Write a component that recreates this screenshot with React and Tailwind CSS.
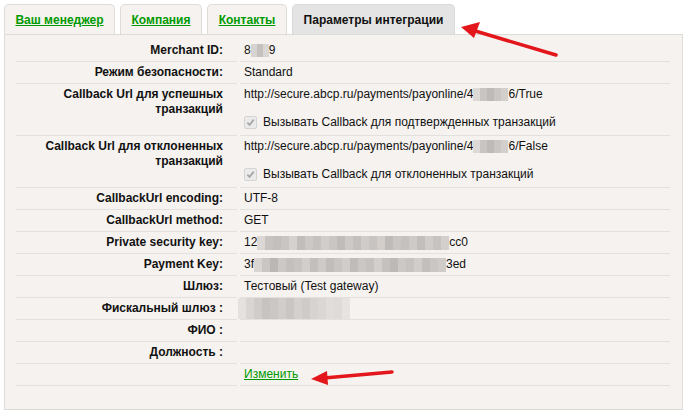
const tabs = [
  { label: 'Ваш менеджер', w: 'w-[111px]' },
  { label: 'Компания', w: 'w-[82px]' },
  { label: 'Контакты', w: 'w-[80px]' },
]

function Blur({ shades, h = 'h-[14px]', w = 'w-[8px]' }) {
  return (
    <span className={`inline-flex align-middle ${h}`}>
      {shades.map((c, i) => (
        <span key={i} className={`inline-block ${w} ${h}`} style={{ background: c }} />
      ))}
    </span>
  )
}

function Check({ children }) {
  return (
    <div className="mt-[13px] flex items-center gap-[6px] h-[15px]">
      <span className="flex items-center justify-center w-[13px] h-[13px] rounded-[2px] border border-[#d4d4d4] bg-[#ebebeb]">
        <svg width="9" height="9" viewBox="0 0 10 10">
          <path d="M1.5 5.2 L4 7.6 L8.6 1.8" fill="none" stroke="#a8a8a8" strokeWidth="2" />
        </svg>
      </span>
      <span>{children}</span>
    </div>
  )
}

function Row({ label, children, tall }) {
  return (
    <>
      <div className={`border-b border-[#e2e1df] pr-[14px] pt-[3px] text-right font-bold leading-[15px] ${tall ? 'pb-[6px]' : 'pb-[3px]'}`}>
        {label}
      </div>
      <div className={`border-b border-[#e2e1df] pl-[4px] pt-[3px] leading-[15px] ${tall ? 'pb-[5px]' : 'pb-[3px]'}`}>
        {children}
      </div>
    </>
  )
}

const g1 = ['#d6d3d0', '#c4c1be', '#d9d6d3']
const g2 = ['#dcd9d6', '#c8c5c2', '#bdbab7', '#c9c6c3', '#d2cfcc']
const g3 = ['#dad7d4', '#c6c3c0', '#c2bfbc', '#c8c5c2', '#d4d1ce', '#c0bdba', '#cbc8c5', '#c5c2bf', '#d0cdca', '#c9c6c3', '#bfbcb9', '#ccc9c6', '#c3c0bd', '#cfccc9', '#c7c4c1', '#d3cec9', '#bebbb8', '#c9c6c3', '#c4c1be', '#cdcac7', '#c1bebb', '#cfccc9', '#c6c3c0', '#d2cfcc']
const g4 = ['#d8d5d2', '#c9c6c3', '#bab7b4', '#cbc8c5', '#c3c0bd', '#c7c4c1', '#d1cecb', '#c2bfbc', '#cdcac7', '#c0bdba', '#c8c5c2', '#d0cdca', '#bfbcb9', '#cac7c4', '#c5c2bf', '#d2cfcc', '#c4c1be', '#bcb9b6', '#cbc8c5', '#c6c3c0', '#d0cdca', '#c2bfbc', '#c9c6c3', '#cecbc8']
const g5 = ['#e4e1de', '#d8d5d2', '#cfccc9', '#c6c3c0', '#cac7c4', '#d0cdca', '#c9c6c3', '#d3d0cd', '#cecbc8', '#d6d3d0', '#dad7d4', '#e0ddda', '#dedbd8', '#e6e3e0']

export default function App() {
  return (
    <div className="relative w-[689px] h-[412px] bg-white font-['Liberation_Sans',Arial,sans-serif] text-[12px] text-[#111] overflow-hidden">
      <div className="pl-[4px] pt-[4px]">
        <div className="flex gap-[5px] items-end">
          {tabs.map((t) => (
            <div key={t.label} className={`${t.w} h-[30px] flex items-center justify-center rounded-t-[5px] border border-b-0 border-[#dedcd9] bg-[#f5f2ef]`}>
              <a href="#" className="font-bold text-[#009a00] underline">{t.label}</a>
            </div>
          ))}
          <div className="w-[163px] h-[30px] flex items-center justify-center rounded-t-[5px] border border-b-0 border-[#d9d9d9] bg-[#e4e4e4] font-bold">
            Параметры интеграции
          </div>
        </div>
        <div className="w-[679px] h-[376px] border border-[#dedcd9] bg-[#f5f2ef] pl-[11px] pt-[5px]">
          <div className="grid grid-cols-[221px_430px] gap-x-[3px]">
            <Row label="Merchant ID:">
              8<Blur shades={g1} h="h-[13px]" w="w-[6px]" />9
            </Row>
            <Row label="Режим безопасности:">Standard</Row>
            <Row label={<>Callback Url для успешных<br />транзакций</>} tall>
              <div>http://secure.abcp.ru/payments/payonline/4<Blur shades={g2} h="h-[13px]" w="w-[7px]" />6/True</div>
              <Check>Вызывать Callback для подтвержденных транзакций</Check>
            </Row>
            <Row label={<>Callback Url для отклоненных<br />транзакций</>} tall>
              <div>http://secure.abcp.ru/payments/payonline/4<Blur shades={g2} h="h-[13px]" w="w-[7px]" />6/False</div>
              <Check>Вызывать Callback для отклоненных транзакций</Check>
            </Row>
            <Row label="CallbackUrl encoding:">UTF-8</Row>
            <Row label="CallbackUrl method:">GET</Row>
            <Row label="Private security key:">
              12<Blur shades={g3} />cc0
            </Row>
            <Row label="Payment Key:">
              3f<Blur shades={g4} />3ed
            </Row>
            <Row label="Шлюз:">Тестовый (Test gateway)</Row>
            <Row label="Фискальный шлюз :">
              <span className="-ml-[6px] -my-[3px] flex h-[21px]">
                {g5.map((c, i) => (
                  <span key={i} className="w-[8px] h-[21px]" style={{ background: c }} />
                ))}
              </span>
            </Row>
            <Row label="ФИО :">{' '}</Row>
            <Row label="Должность :">{' '}</Row>
            <Row label="">
              <a href="#" className="text-[#009a00] underline">Изменить</a>
            </Row>
          </div>
        </div>
      </div>

      <svg className="absolute left-0 top-0 pointer-events-none" width="689" height="412">
        <g fill="#e3161b" stroke="#e3161b" strokeLinecap="round">
          <line x1="556" y1="55" x2="472" y2="30" strokeWidth="3.5" />
          <polygon points="461,27 480,22 474,38" stroke="none" />
          <line x1="392" y1="372" x2="324" y2="378" strokeWidth="3.5" />
          <polygon points="311,379 327,371 328,385" stroke="none" />
        </g>
      </svg>
    </div>
  )
}
